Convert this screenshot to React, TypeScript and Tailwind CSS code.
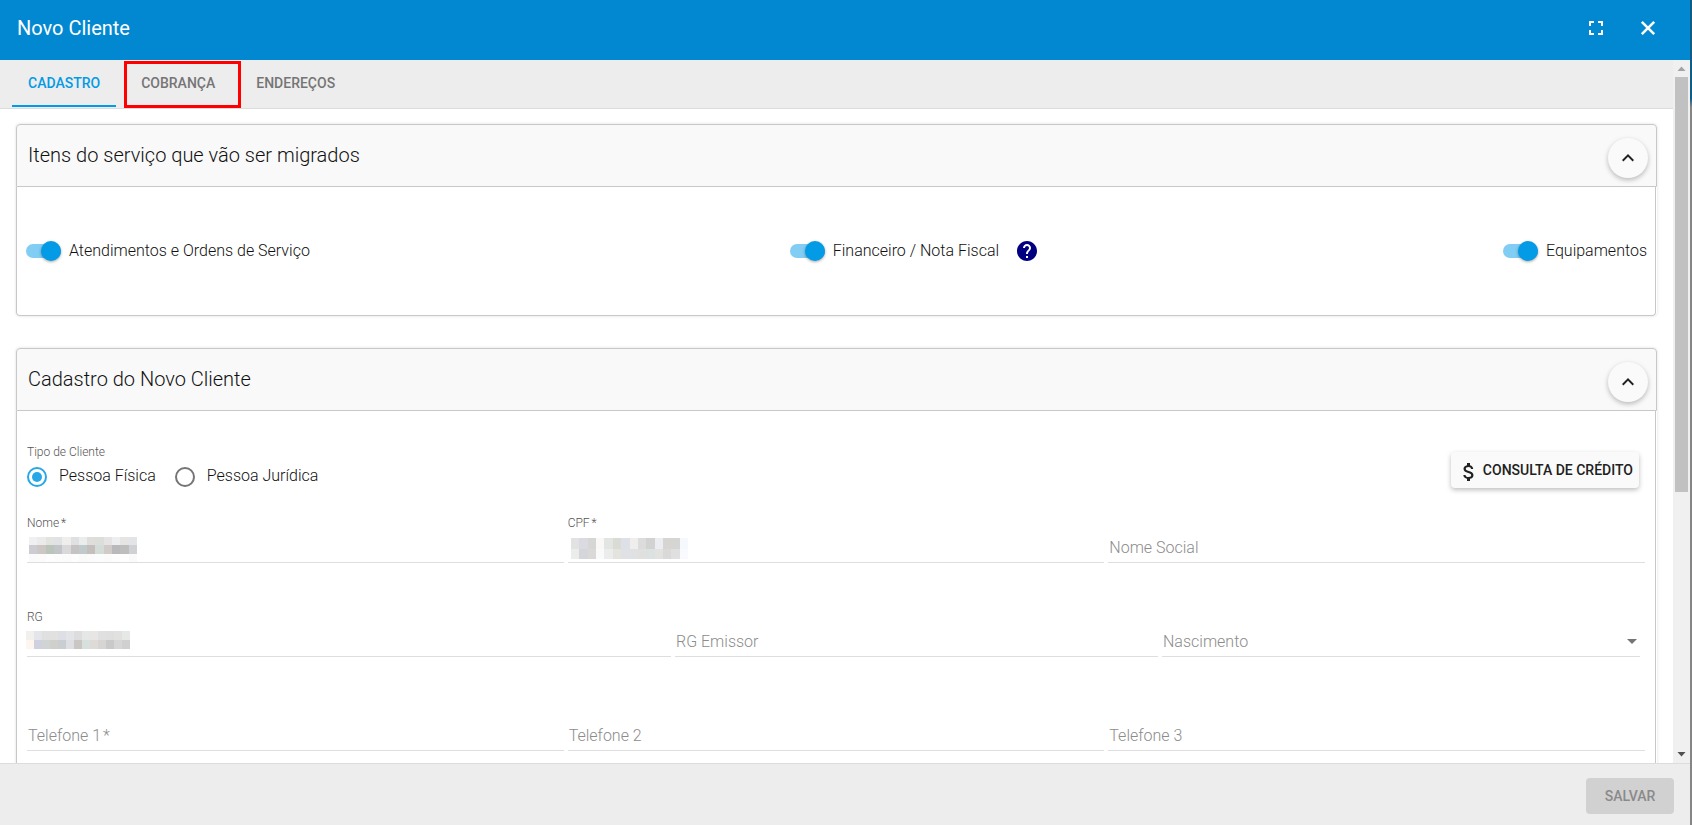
import { useState } from 'react'
import type { ReactNode } from 'react'
import { MdAttachMoney, MdFullscreen, MdHelp, MdKeyboardArrowUp } from 'react-icons/md'

interface MosaicProps {
  rows: string[][]
  className: string
}

interface FieldProps {
  id: string
  label: string
  required?: boolean
  mosaic?: ReactNode
  arrow?: boolean
}

const tabs = ['CADASTRO', 'COBRANÇA', 'ENDEREÇOS']

const nomeMosaic = [
  ['#f0eff1', '#edebea', '#e1e4e0', '#e1e2e4', '#f0eeed', '#e1e0e1', '#e9eeec', '#e0dedc', '#dbdeda', '#e5e3e3', '#edeef0', '#e6e5e3', '#e3e4e7'],
  ['#cdccd1', '#ccc7c4', '#bac4bb', '#c2c5c8', '#dad9da', '#c7c2c3', '#c1cacb', '#c4bfbc', '#d4dcd8', '#d0cbc8', '#b9b8ba', '#bfbebe', '#d0d1d4'],
  ['#fafafa', '#fbfbfb', '#fdfdfd', '#fcfcfc', '#fbfbfb', '#fdfdfd', '#fafafa', '#fbfbfb', '#fcfcfc', '#fbfbfb', '#fdfdfd', '#fefefe', '#fafafa'],
]

const cpfMosaic = [
  ['#e1e3e2', '#dadae0', '#d6d6d5', '#f9f8f7', '#e2e5e4', '#d9dbd4', '#dde0e7', '#efeeed', '#dcdcdd', '#d2d2d3', '#ecedf2', '#d7d5d2', '#d5d5d4', '#f5f8fc'],
  ['#ebedea', '#d4d6dc', '#dad9d7', '#fafafa', '#eaedec', '#e5e3de', '#dfe1e5', '#e0e1e2', '#e0e0df', '#dce1e2', '#e2e2e0', '#dad9d8', '#e0e0e1', '#f8fafd'],
]

const rgMosaic = [
  ['#f1f0ec', '#e4e5eb', '#e0e0e1', '#e1e1e0', '#dedfe4', '#e3e4e8', '#dddddd', '#e4e7e5', '#e8e6e4', '#e0e0e1', '#dfdfe0', '#e1e1e0', '#e6e8e7'],
  ['#fdf5ee', '#cfd1df', '#d1d4d4', '#cfd0cc', '#cacdd1', '#dedfe3', '#cac6c4', '#d8e0dd', '#dedad7', '#d7d5d4', '#c9c9c9', '#d5d6d5', '#d0d0d1'],
]

function Mosaic({ rows, className }: MosaicProps) {
  return (
    <svg
      aria-hidden="true"
      className={`pointer-events-none absolute ${className}`}
      viewBox={`0 0 ${rows[0].length} ${rows.length}`}
      preserveAspectRatio="none"
      shapeRendering="crispEdges"
    >
      {rows.map((row, y) =>
        row.map((color, x) => <rect key={`${x}-${y}`} x={x} y={y} width="1" height="1" fill={color} />)
      )}
    </svg>
  )
}

function Toggle({ label }: { label: string }) {
  return (
    <label className="flex cursor-pointer items-center gap-2 text-base leading-6 font-light text-[#111111]">
      <span className="relative flex h-5 w-[35px] items-center">
        <input type="checkbox" defaultChecked className="peer sr-only" />
        <span className="h-3.5 w-full rounded-full bg-black/40 peer-checked:bg-[#81cdf3]" />
        <span className="absolute left-0 h-5 w-5 rounded-full bg-gray-50 shadow-[0_1px_3px_rgba(0,0,0,0.35)] peer-checked:left-[15px] peer-checked:bg-[#039be5]" />
      </span>
      {label}
    </label>
  )
}

function Field({ id, label, required, mosaic, arrow }: FieldProps) {
  return (
    <div className={`relative flex h-[54px] min-w-0 flex-col justify-between border-b border-[#dedede] ${arrow ? 'mr-[5px]' : ''}`}>
      {mosaic ? (
        <label htmlFor={id} className="pt-1.5 text-xs leading-4 font-light text-[#555555]">
          {label}
          {required && <span className="pl-0.5">*</span>}
        </label>
      ) : (
        <label htmlFor={id} className="pointer-events-none absolute bottom-0.5 left-px text-base leading-6 font-light text-[#8c8c8c]">
          {label}
          {required && <span className="pl-0.5">*</span>}
        </label>
      )}
      <input id={id} type="text" className="mt-auto h-7 w-full bg-transparent px-0.5 text-base outline-none" />
      {mosaic}
      {arrow && (
        <svg aria-hidden="true" viewBox="0 0 10 5" className="pointer-events-none absolute bottom-3 right-[3px] h-[5px] w-2.5 fill-[#757575]">
          <path d="M0 0h10L5 5z" />
        </svg>
      )}
    </div>
  )
}

function Section({ title, children }: { title: string; children: ReactNode }) {
  const [open, setOpen] = useState(true)

  return (
    <section className="rounded shadow-[0_0_3px_rgba(0,0,0,0.14)]">
      <div className="flex h-[63px] items-center justify-between rounded-t border border-[#c8c8c8] bg-[#f9f9f9] pl-[11px] pr-2">
        <h2 className="pb-0.5 text-xl leading-7 font-light text-[#111111]">{title}</h2>
        <button
          type="button"
          aria-label={`Recolher ${title}`}
          aria-expanded={open}
          onClick={() => setOpen(!open)}
          className="mt-1 flex h-10 w-10 items-center justify-center rounded-full bg-[#fafafa] shadow-[0_2px_5px_rgba(0,0,0,0.26)]"
        >
          <MdKeyboardArrowUp className="h-6 w-6" />
        </button>
      </div>
      {open && <div className="mr-px rounded-b border border-t-0 border-[#c8c8c8] bg-white">{children}</div>}
    </section>
  )
}

function Scrollbar() {
  return (
    <div aria-hidden="true" className="flex w-[17px] shrink-0 flex-col items-center bg-[#f0f0f0]">
      <svg viewBox="0 0 17 17" className="h-[17px] w-[17px] fill-[#a3a3a3]">
        <path d="M8.500 6.500L12.500 11H4.500z" />
      </svg>
      <div className="flex w-[13px] grow flex-col">
        <div className="h-[62%] bg-[#c1c1c1]" />
      </div>
      <svg viewBox="0 0 17 17" className="h-[17px] w-[17px] fill-[#505050]">
        <path d="M4.500 6h8L8.500 10.500z" />
      </svg>
    </div>
  )
}

export default function App() {
  const [tab, setTab] = useState('CADASTRO')

  return (
    <div className="flex h-screen bg-gradient-to-b from-[#115c86] from-12% to-[#858585] to-13% pr-0.5 font-['Roboto',sans-serif] text-[#212121]">
      <div className="flex min-w-0 grow flex-col bg-white">
        {/* Title bar */}
        <header className="flex h-[60px] shrink-0 items-center justify-between bg-[#0288d1] pl-[17px] pr-[30px] text-white">
          <h1 className="pb-1 text-xl leading-7">Novo Cliente</h1>
          <div className="flex items-center gap-7 pb-1">
            <button type="button" aria-label="Tela cheia">
              <MdFullscreen className="h-6 w-6" />
            </button>
            <button type="button" aria-label="Fechar">
              <svg viewBox="0 0 24 24" className="h-6 w-6 fill-none stroke-current">
                <path d="M5.800 5.800L18.200 18.200M18.200 5.800L5.800 18.200" strokeWidth="2.600" />
              </svg>
            </button>
          </div>
        </header>

        <div className="flex min-h-0 grow">
          <div className="min-w-0 grow overflow-y-auto [scrollbar-width:none]">
            <nav role="tablist" className="flex h-[49px] border-b border-[#dcdcdc] bg-[#ededed] pl-3 pt-px">
              {tabs.map((name) => (
                <div key={name} className="relative">
                  <button
                    type="button"
                    role="tab"
                    aria-selected={tab === name}
                    onClick={() => setTab(name)}
                    className={`h-[46px] border-b-2 px-4 text-sm font-medium ${
                      tab === name ? 'border-[#039be5] text-[#039be5]' : 'border-transparent text-[#757575]'
                    } ${name === 'COBRANÇA' ? 'mx-[9px]' : ''}`}
                  >
                    {name}
                  </button>
                  {name === 'COBRANÇA' && (
                    <span className="pointer-events-none absolute -right-px left-2 top-0 h-[47px] border-3 border-[#ff0000]" />
                  )}
                </div>
              ))}
            </nav>

            <main className="flex flex-col gap-8 px-4 pb-8 pt-[15px]">
              <Section title="Itens do serviço que vão ser migrados">
                <div className="flex h-32 items-center justify-between pl-[9px] pr-2">
                  <div className="pr-4">
                    <Toggle label="Atendimentos e Ordens de Serviço" />
                  </div>
                  <div className="flex items-center gap-4">
                    <Toggle label="Financeiro / Nota Fiscal" />
                    <button type="button" aria-label="Ajuda">
                      <MdHelp className="h-6 w-6 text-[#000080]" />
                    </button>
                  </div>
                  <Toggle label="Equipamentos" />
                </div>
              </Section>

              <Section title="Cadastro do Novo Cliente">
                <form className="px-2.5 pb-40 pt-[33px]" onSubmit={(e) => e.preventDefault()}>
                  <div className="flex items-start justify-between pr-1.5">
                    <fieldset>
                      <legend className="text-xs leading-4 font-light text-[#555555]">Tipo de Cliente</legend>
                      <div className="flex items-center gap-[19px]">
                        {['Pessoa Física', 'Pessoa Jurídica'].map((tipo, idx) => (
                          <label key={tipo} className="flex items-center gap-3 text-base leading-8 font-light text-[#111111]">
                            <input
                              type="radio"
                              name="tipo"
                              defaultChecked={idx === 0}
                              className="mt-0.5 h-5 w-5 appearance-none rounded-full border-2 border-[#757575] p-[3px] checked:border-[#27a7e8] checked:bg-[#27a7e8] checked:bg-clip-content"
                            />
                            {tipo}
                          </label>
                        ))}
                      </div>
                    </fieldset>
                    <button
                      type="button"
                      className="mt-2 flex h-9 items-center gap-0.5 rounded-sm bg-[#fafafa] px-1.5 text-sm font-medium shadow-[0_2px_5px_rgba(0,0,0,0.26)]"
                    >
                      <MdAttachMoney className="mt-1 h-6 w-6" />
                      CONSULTA DE CRÉDITO
                    </button>
                  </div>

                  <div className="mt-[17px] grid grid-cols-3 gap-1">
                    <Field id="nome" label="Nome" required mosaic={<Mosaic rows={nomeMosaic} className="bottom-0 left-0.5 h-[25px] w-[108px]" />} />
                    <Field id="cpf" label="CPF" required mosaic={<Mosaic rows={cpfMosaic} className="bottom-[3px] left-[3px] h-[21px] w-[117px]" />} />
                    <Field id="nomeSocial" label="Nome Social" />
                  </div>
                  <div className="mt-10 grid grid-cols-[4fr_3fr_3fr] gap-1">
                    <Field id="rg" label="RG" mosaic={<Mosaic rows={rgMosaic} className="-left-px bottom-[7px] h-[18px] w-[104px]" />} />
                    <Field id="rgEmissor" label="RG Emissor" />
                    <Field id="nascimento" label="Nascimento" arrow />
                  </div>
                  <div className="mt-10 grid grid-cols-3 gap-1">
                    <Field id="telefone1" label="Telefone 1" required />
                    <Field id="telefone2" label="Telefone 2" />
                    <Field id="telefone3" label="Telefone 3" />
                  </div>
                </form>
              </Section>
            </main>
          </div>
          <Scrollbar />
        </div>

        <footer className="flex h-[62px] shrink-0 items-center justify-end border-t border-[#dcdcdc] bg-[#ededed] pr-4">
          <button type="button" disabled className="mt-0.5 h-9 w-22 rounded-sm bg-[#d1d1d1] text-sm font-medium text-[#8a8a8a]">
            SALVAR
          </button>
        </footer>
      </div>
    </div>
  )
}
